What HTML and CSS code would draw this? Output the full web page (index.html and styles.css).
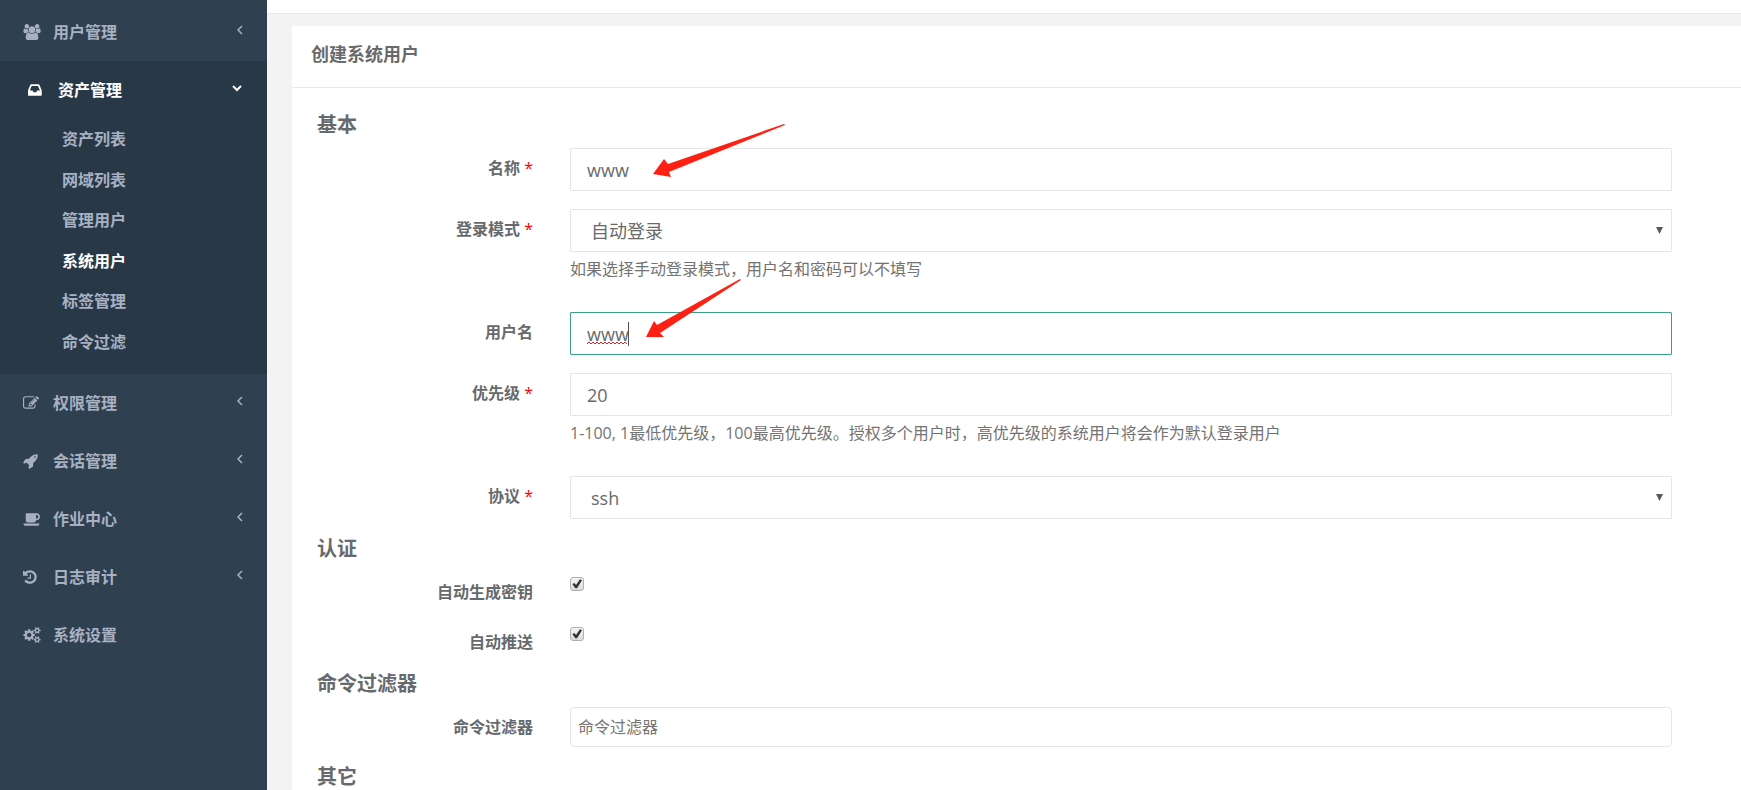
FILE: index.html
```html
<!DOCTYPE html>
<html lang="zh-CN">
<head>
<meta charset="utf-8">
<title>创建系统用户</title>
<link rel="stylesheet" href="styles.css">
</head>
<body>
<div class="layout">
  <nav class="sidebar">
    <ul class="menu">
      <li class="menu-item">
        <a class="menu-link" href="#">
          <svg class="menu-icon wide" viewBox="0 0 1920 1792"><path d="M593 896q-162 5-265 128h-134q-82 0-138-40.5t-56-118.5q0-353 124-353 6 0 43.5 21t97.5 42.5 119 21.5q67 0 133-23-5 37-5 66 0 159 93 290zm1071 637q0 120-73 189.5t-194 69.5h-874q-121 0-194-69.5t-73-189.5q0-53 3.5-103.5t14-109 26.5-108.5 43-97.5 62-81 85.5-53.5 111.5-20q10 0 43 21.5t73 48 107 48 135 21.5 135-21.5 107-48 73-48 43-21.5q61 0 111.5 20t85.5 53.5 62 81 43 97.5 26.5 108.5 14 109 3.5 103.5zm-1024-1277q0 106-75 181t-181 75-181-75-75-181 75-181 181-75 181 75 75 181zm704 384q0 159-112.5 271.5t-271.5 112.5-271.5-112.5-112.5-271.5 112.5-271.5 271.5-112.5 271.5 112.5 112.5 271.5zm576 225q0 78-56 118.5t-138 40.5h-134q-103-123-265-128 93-131 93-290 0-29-5-66 66 23 133 23 59 0 119-21.5t97.5-42.5 43.5-21q124 0 124 353zm-128-609q0 106-75 181t-181 75-181-75-75-181 75-181 181-75 181 75 75 181z"/></svg>
          <span class="menu-text">用户管理</span>
          <svg class="chevron" viewBox="0 0 10 10"><path d="M7 1L3 5l4 4"/></svg>
        </a>
      </li>
      <li class="menu-item open">
        <a class="menu-link" href="#">
          <svg class="menu-icon" viewBox="128 0 1792 1792"><path d="M1151 960h316q-1-3-2.5-8.5t-2.5-7.5l-212-496h-708l-212 496q-1 3-2.5 8.5t-2.5 7.5h316l95 192h320zm513 30v482q0 26-19 45t-45 19h-1408q-26 0-45-19t-19-45v-482q0-62 25-123l238-552q10-25 36.5-42t52.5-17h832q26 0 52.5 17t36.5 42l238 552q25 61 25 123z"/></svg>
          <span class="menu-text">资产管理</span>
          <svg class="chevron" viewBox="0 0 10 10"><path d="M1 3l4 4 4-4"/></svg>
        </a>
        <ul class="submenu">
          <li><a href="#">资产列表</a></li>
          <li><a href="#">网域列表</a></li>
          <li><a href="#">管理用户</a></li>
          <li><a class="current" href="#">系统用户</a></li>
          <li><a href="#">标签管理</a></li>
          <li><a href="#">命令过滤</a></li>
        </ul>
      </li>
      <li class="menu-item">
        <a class="menu-link" href="#">
          <svg class="menu-icon" viewBox="0 0 1792 1792"><path d="M888 1184l116-116-152-152-116 116v56h96v96h56zm440-720q-16-16-33 1l-350 350q-17 17-1 33t33-1l350-350q17-17 1-33zm80 594v190q0 119-84.5 203.5t-203.5 84.5h-832q-119 0-203.5-84.5t-84.5-203.5v-832q0-119 84.5-203.5t203.5-84.5h832q63 0 117 25 15 7 18 23 3 17-9 29l-49 49q-14 14-32 8-23-6-45-6h-832q-66 0-113 47t-47 113v832q0 66 47 113t113 47h832q66 0 113-47t47-113v-126q0-13 9-22l64-64q15-15 35-7t20 29zm-96-738l288 288-672 672h-288v-288zm444 132l-92 92-288-288 92-92q28-28 68-28t68 28l152 152q28 28 28 68t-28 68z"/></svg>
          <span class="menu-text">权限管理</span>
          <svg class="chevron" viewBox="0 0 10 10"><path d="M7 1L3 5l4 4"/></svg>
        </a>
      </li>
      <li class="menu-item">
        <a class="menu-link" href="#">
          <svg class="menu-icon" viewBox="0 0 1792 1792"><path d="M1440 448q0-40-28-68t-68-28-68 28-28 68 28 68 68 28 68-28 28-68zm224-288q0 249-75.5 430.5t-253.5 360.5q-81 80-195 176l-20 379q-2 16-16 26l-384 224q-7 4-16 4-12 0-23-9l-64-64q-13-14-8-32l85-276-281-281-276 85q-3 1-9 1-14 0-23-9l-64-64q-17-19-5-39l224-384q10-14 26-16l379-20q96-114 176-195 188-187 358-258t431-71q14 0 24 9.5t10 22.5z"/></svg>
          <span class="menu-text">会话管理</span>
          <svg class="chevron" viewBox="0 0 10 10"><path d="M7 1L3 5l4 4"/></svg>
        </a>
      </li>
      <li class="menu-item">
        <a class="menu-link" href="#">
          <svg class="menu-icon wide" viewBox="0 0 1920 1792"><path d="M1664 640q0-80-56-136t-136-56h-64v384h64q80 0 136-56t56-136zm-1664 768h1792q0 106-75 181t-181 75h-1280q-106 0-181-75t-75-181zm1856-768q0 159-112.5 271.5t-271.5 112.5h-64v32q0 92-66 158t-158 66h-704q-92 0-158-66t-66-158v-736q0-26 19-45t45-19h1152q159 0 271.5 112.5t112.5 271.5z"/></svg>
          <span class="menu-text">作业中心</span>
          <svg class="chevron" viewBox="0 0 10 10"><path d="M7 1L3 5l4 4"/></svg>
        </a>
      </li>
      <li class="menu-item">
        <a class="menu-link" href="#">
          <svg class="menu-icon" viewBox="128 0 1792 1792"><path d="M1664 896q0 156-61 298t-164 245-245 164-298 61q-172 0-327-72.5t-264-204.5q-7-10-6.5-22.5t8.5-20.500l137-138q10-9 25-9 16 2 23 12 73 95 179 147t225 52q104 0 198.5-40.5t163.5-109.5 109.5-163.5 40.5-198.5-40.5-198.5-109.5-163.5-163.5-109.5-198.5-40.5q-98 0-188 35.5t-160 101.5l137 138q31 30 14 69-17 40-59 40h-448q-26 0-45-19t-19-45v-448q0-42 40-59 39-17 69 14l130 129q107-101 244.5-156.5t284.5-55.5q156 0 298 61t245 164 164 245 61 298zm-640-288v448q0 14-9 23t-23 9h-320q-14 0-23-9t-9-23v-64q0-14 9-23t23-9h224v-352q0-14 9-23t23-9h64q14 0 23 9t9 23z"/></svg>
          <span class="menu-text">日志审计</span>
          <svg class="chevron" viewBox="0 0 10 10"><path d="M7 1L3 5l4 4"/></svg>
        </a>
      </li>
      <li class="menu-item">
        <a class="menu-link" href="#">
          <svg class="menu-icon wide" viewBox="0 0 1920 1792"><path d="M896 896q0-106-75-181t-181-75-181 75-75 181 75 181 181 75 181-75 75-181zm768 512q0-52-38-90t-90-38-90 38-38 90q0 53 37.5 90.5t90.5 37.5 90.5-37.5 37.5-90.5zm0-1024q0-52-38-90t-90-38-90 38-38 90q0 53 37.5 90.5t90.5 37.5 90.5-37.5 37.5-90.5zm-384 421v185q0 10-7 19.5t-16 10.5l-155 24q-11 35-32 76 34 48 90 115 7 11 7 20 0 12-7 19-23 30-82.5 89.5t-78.5 59.5q-11 0-21-7l-115-90q-37 19-77 31-11 108-23 155-7 24-30 24h-186q-11 0-20-7.5t-10-17.5l-23-153q-34-10-75-31l-118 89q-7 7-20 7-11 0-21-8-144-133-144-160 0-9 7-19 10-14 41-53t47-61q-23-44-35-82l-152-24q-10-1-17-9.5t-7-19.5v-185q0-10 7-19.5t16-10.5l155-24q11-35 32-76-34-48-90-115-7-11-7-20 0-12 7-20 22-30 82-89t79-59q11 0 21 7l115 90q34-18 77-32 11-108 23-154 7-24 30-24h186q11 0 20 7.5t10 17.5l23 153q34 10 75 31l118-89q8-7 20-7 11 0 21 8 144 133 144 160 0 8-7 19-12 16-42 54t-45 60q23 48 34 82l152 23q10 2 17 10.5t7 19.5zm640 533v140q0 16-149 31-12 27-30 52 51 113 51 138 0 4-4 7-122 71-124 71-8 0-46-47t-52-68q-20 2-30 2t-30-2q-14 21-52 68t-46 47q-2 0-124-71-4-3-4-7 0-25 51-138-18-25-30-52-149-15-149-31v-140q0-16 149-31 13-29 30-52-51-113-51-138 0-4 4-7 4-2 35-20t59-34 30-16q8 0 46 46.5t52 67.5q20-2 30-2t30 2q51-71 92-112l6-2q4 0 124 70 4 3 4 7 0 25-51 138 17 23 30 52 149 15 149 31zm0-1024v140q0 16-149 31-12 27-30 52 51 113 51 138 0 4-4 7-122 71-124 71-8 0-46-47t-52-68q-20 2-30 2t-30-2q-14 21-52 68t-46 47q-2 0-124-71-4-3-4-7 0-25 51-138-18-25-30-52-149-15-149-31v-140q0-16 149-31 13-29 30-52-51-113-51-138 0-4 4-7 4-2 35-20t59-34 30-16q8 0 46 46.5t52 67.5q20-2 30-2t30 2q51-71 92-112l6-2q4 0 124 70 4 3 4 7 0 25-51 138 17 23 30 52 149 15 149 31z"/></svg>
          <span class="menu-text">系统设置</span>
        </a>
      </li>
    </ul>
  </nav>

  <div class="page">
    <header class="topbar"></header>
    <main class="card">
      <h1 class="card-title">创建系统用户</h1>
      <form class="card-body">
        <h2 class="section">基本</h2>
        <div class="row">
          <label class="label" for="name">名称 <span class="required">*</span></label>
          <div class="field">
            <input class="control" id="name" type="text" value="www">
            <svg class="arrow" viewBox="0 0 220 60"><path d="M83 56L94 41L98 46L214 6L215 7L99 54L101 59Z"/></svg>
          </div>
        </div>
        <div class="row">
          <label class="label" for="mode">登录模式 <span class="required">*</span></label>
          <div class="field">
            <div class="select-wrap">
              <select class="control" id="mode"><option>自动登录</option><option>手动登录</option></select>
            </div>
            <p class="help">如果选择手动登录模式，用户名和密码可以不填写</p>
          </div>
        </div>
        <div class="row">
          <label class="label" for="username">用户名</label>
          <div class="field">
            <input class="control focused" id="username" type="text" value="www">
            <svg class="spelling" viewBox="0 0 42 24"><path class="squiggle" d="M0 22l2-2 2 2 2-2 2 2 2-2 2 2 2-2 2 2 2-2 2 2 2-2 2 2 2-2 2 2 2-2 2 2 2-2 2 2 2-2 2 2"/><path class="caret" d="M41.500 0v24"/></svg>
            <svg class="arrow" viewBox="0 0 220 60"><path d="M76 55L84 39L87 43L170 -3L171 -2L90 51L94 55Z"/></svg>
          </div>
        </div>
        <div class="row">
          <label class="label" for="priority">优先级 <span class="required">*</span></label>
          <div class="field">
            <input class="control" id="priority" type="text" value="20">
            <p class="help">1-100, 1最低优先级，100最高优先级。授权多个用户时，高优先级的系统用户将会作为默认登录用户</p>
          </div>
        </div>
        <div class="row">
          <label class="label" for="protocol">协议 <span class="required">*</span></label>
          <div class="field">
            <div class="select-wrap">
              <select class="control" id="protocol"><option>ssh</option><option>rdp</option></select>
            </div>
          </div>
        </div>

        <h2 class="section">认证</h2>
        <div class="row">
          <label class="label" for="autokey">自动生成密钥</label>
          <div class="field"><input class="check" id="autokey" type="checkbox" checked></div>
        </div>
        <div class="row">
          <label class="label" for="autopush">自动推送</label>
          <div class="field"><input class="check" id="autopush" type="checkbox" checked></div>
        </div>

        <h2 class="section">命令过滤器</h2>
        <div class="row">
          <label class="label" for="filter">命令过滤器</label>
          <div class="field"><input class="control tags" id="filter" type="text" placeholder="命令过滤器"></div>
        </div>

        <h2 class="section">其它</h2>
      </form>
    </main>
  </div>
</div>
</body>
</html>
```
FILE: styles.css
```css
* {
  box-sizing: border-box;
}

body {
  margin: 0;
  overflow: hidden;
  background: #f3f3f4;
  color: #676a6c;
  font-family: "Open Sans", "Noto Sans CJK SC", sans-serif;
  font-size: 16px;
  line-height: 23px;
}

ul {
  margin: 0;
  padding: 0;
  list-style: none;
}

.layout {
  display: flex;
  height: 100vh;
}

/* Sidebar */
.sidebar {
  flex: none;
  width: 267px;
  padding-top: 3px;
  background: #2f4050;
}

.menu-link {
  display: flex;
  align-items: center;
  height: 58px;
  padding: 0 22px 0 23px;
  color: #a7b1c2;
  font-weight: 600;
  text-decoration: none;
}

.menu-icon {
  width: 16px;
  height: 16px;
  margin-right: 14px;
  fill: currentColor;
}

.menu-icon.wide {
  width: 18px;
  margin-right: 12px;
}

.menu-text {
  flex: 1;
}

.chevron {
  width: 10px;
  height: 10px;
  margin-bottom: 4px;
  fill: none;
  stroke: currentColor;
  stroke-width: 1.5;
}

.open {
  padding-bottom: 12px;
  border-left: 5px solid #293846;
  background: #293846;
}

.open .menu-link {
  padding-right: 25px;
  color: #fff;
}

.open .chevron {
  stroke-width: 2;
}

.submenu a {
  display: flex;
  align-items: center;
  height: 41px;
  padding-left: 57px;
  color: #a7b1c2;
  font-weight: 600;
  text-decoration: none;
}

.submenu li:nth-child(even) a {
  height: 40px;
}

.submenu .current {
  color: #fff;
}

/* Page */
.page {
  flex: 1;
  min-width: 0;
}

.topbar {
  height: 14px;
  border-bottom: 1px solid #e7eaec;
  background: #fff;
}

.card {
  margin: 12px 0 0 25px;
  background: #fff;
}

.card-title {
  margin: 0;
  padding: 17px 19px 21px;
  border-bottom: 1px solid #e7eaec;
  font-size: 18px;
  font-weight: 600;
  line-height: 23px;
}

.card-body {
  padding: 25px 69px 25px 25px;
}

.section {
  margin: 0 0 12px;
  padding-top: 1px;
  font-size: 20px;
  font-weight: 600;
  line-height: 22px;
}

.row {
  display: grid;
  grid-template-columns: 216px 1fr;
  column-gap: 37px;
  margin-bottom: 18px;
}

.label {
  padding-top: 9px;
  font-weight: 600;
  text-align: right;
}

.required {
  color: #f00;
  font-weight: 400;
}

.field {
  position: relative;
}

.control {
  display: block;
  width: 100%;
  height: 43px;
  padding: 0 16px;
  border: 1px solid #e5e6e7;
  border-radius: 1px;
  outline: none;
  background: #fff;
  color: #676a6c;
  font-family: inherit;
  font-size: 18px;
}

select.control {
  padding: 0 20px;
  appearance: none;
}

.control.focused {
  border-color: #3a9f86;
}

.control.tags {
  height: 40px;
  padding: 0 7px;
  border-radius: 4px;
  font-size: 16px;
}

.control.tags::placeholder {
  color: #757575;
}

.select-wrap {
  position: relative;
}

.select-wrap::after {
  content: "";
  position: absolute;
  top: 18px;
  right: 9px;
  width: 7px;
  height: 7px;
  background: #5a5a5a;
  clip-path: polygon(0 0, 100% 0, 50% 100%);
  pointer-events: none;
}

.help {
  margin: 6px 0 13px;
  color: #737373;
}

.check {
  display: block;
  width: 14px;
  height: 14px;
  margin: 5px 0 0;
  border: 1px solid #b0b0b0;
  border-radius: 3px;
  background: linear-gradient(#f4f4f4, #dcdcdc);
  appearance: none;
}

.check:checked::after {
  content: "";
  display: block;
  width: 12px;
  height: 12px;
  background: #333;
  clip-path: polygon(12% 52%, 28% 42%, 42% 58%, 74% 10%, 92% 18%, 50% 86%, 36% 86%);
}

/* Marks drawn over the fields */
.arrow {
  position: absolute;
  top: -30px;
  left: 0;
  width: 220px;
  height: 60px;
  overflow: visible;
  fill: #ff2014;
  pointer-events: none;
}

.spelling {
  position: absolute;
  top: 10px;
  left: 17px;
  width: 42px;
  height: 24px;
  fill: none;
  pointer-events: none;
}

.squiggle {
  stroke: #e8202a;
}

.caret {
  stroke: #555;
}
```
